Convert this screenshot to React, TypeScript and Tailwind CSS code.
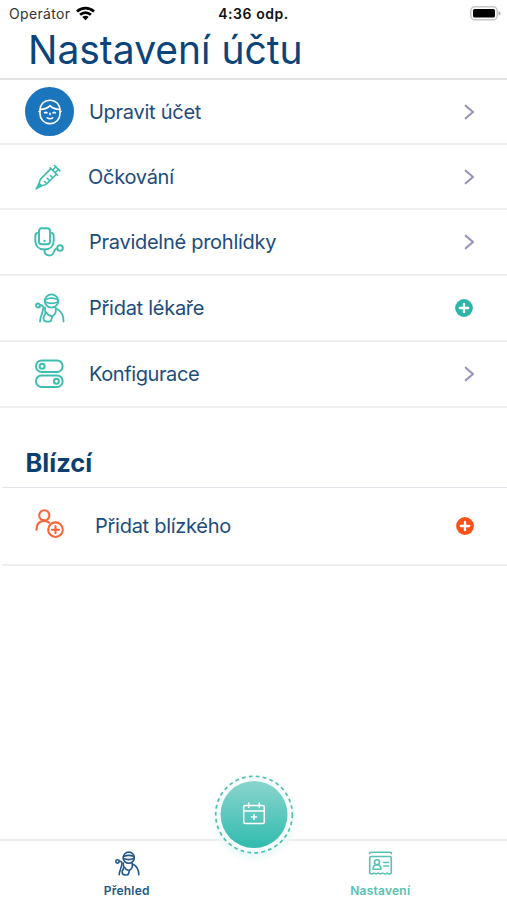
import type { ReactNode } from 'react';

const TEAL = '#3dbdb0';

function FaceIcon() {
  return (
    <svg width="24" height="26" viewBox="0 0 24 26" fill="none" stroke="white" strokeWidth="1.6" strokeLinecap="round" strokeLinejoin="round">
      <rect x="2" y="1.2" width="20" height="23.4" rx="9.6" />
      <path d="M2.2 10.5C6.5 10.3 10 8.8 12 6.6c2 2.200 5.500 3.700 9.800 3.900" />
      <path d="M6.600 13.800q1.200-1 2.400 0M15 13.800q1.200-1 2.400 0M9.300 18.800q2.700 1.800 5.400 0" />
      <path d="M12 14.400v1.200" />
      <path d="M2 12.500H1M22 12.500h1" />
    </svg>
  );
}

function SyringeIcon() {
  return (
    <svg className="mr-[3px]" width="26" height="26" viewBox="0 0 26 26" fill="none" stroke={TEAL} strokeWidth="1.600" strokeLinecap="round" strokeLinejoin="round">
      <path d="M15.200 3.900l7.400 7.400" />
      <path d="M15.700 4.900L6 14.600c-1.500 1.500-1.300 3.100-1.900 4.800l2.300 2.300c1.800-.6 3.700-.2 5.200-1.700l9.800-9.800" />
      <path d="M17.700 6l3.300-3.300M20.200 8.500l3.300-3.300M19.200 1.300l5.600 5.600" />
      <path d="M4.200 19.500L1.200 24.800l5.300-3.100M1.200 24.800l3.500-3.300" />
      <path d="M17.500 13.500l-2-2M14.500 16.500l-2.300-2.300M11.500 19.500l-2-2" />
    </svg>
  );
}

function StethoscopeIcon() {
  return (
    <svg className="mr-px" width="30" height="30" viewBox="0 0 30 30" fill="none" stroke={TEAL} strokeWidth="1.900" strokeLinecap="round" strokeLinejoin="round">
      <rect x="5" y="1.200" width="11" height="16" rx="2.700" />
      <path d="M3.200 6C1.700 6.500 1.300 7.800 1.300 9.500v3.700c0 5.800 3.800 9.300 9.200 9.300s9.200-3.500 9.200-9.300V9.500c0-1.700-.4-3-1.900-3.500" />
      <path d="M10.400 22.700c0 3.700 2 5.800 5 5.800 6.300 0 3-7 8-7.100" />
      <circle cx="26" cy="21" r="2.800" />
      <path d="M10.500 14v.1" strokeWidth="2.300" />
    </svg>
  );
}

function DoctorIcon({ size, color, weight }: { size: number; color: string; weight: number }) {
  return (
    <svg width={size} height={size} viewBox="0 0 30 30" fill="none" stroke={color} strokeWidth={weight} strokeLinecap="round" strokeLinejoin="round">
      <circle cx="16.500" cy="8" r="6.700" />
      <path d="M10.200 6.700q6.300-3 12.600 0M10.200 9q6.300 2.600 12.600 0" />
      <circle cx="3" cy="12.500" r="2" />
      <path d="M5 12c2.800.2 3.800 1.700 3.200 4-.7 2.500-.9 4-1.700 6.200-.8 2-1.400 3.500-1.500 6.300" />
      <path d="M10 14.500c-.2 2.300.8 4.500.2 6.500-.5 1.500-1.700 2.200-1.700 4 0 2.300 1.500 3.700 3.700 3.700h2c4 0 1-5 4.300-6.500 3-1.500 2.500-4 2.200-7.200" />
      <path d="M11.500 19.500c1 2.200 2.800 3.500 5 3.500M21 15.500c4 1.500 7.500 6 7.600 13" />
    </svg>
  );
}

function TogglesIcon() {
  return (
    <svg width="30" height="30" viewBox="0 0 30 30" fill="none" stroke={TEAL} strokeWidth="2">
      <rect x="1" y="1.400" width="26.600" height="11.600" rx="5.600" />
      <rect x="1" y="16.400" width="26.600" height="11.600" rx="5.600" />
      <circle cx="7.100" cy="7.300" r="2.500" />
      <circle cx="21.400" cy="22.200" r="2.500" />
    </svg>
  );
}

function PersonAddIcon() {
  return (
    <svg width="30" height="30" viewBox="0 0 30 30" fill="none" stroke="#f9663a" strokeWidth="2.100" strokeLinecap="round">
      <circle cx="9.300" cy="6.300" r="5.100" />
      <path d="M1.400 20.700c.2-5.200 3-8.700 7.700-8.800 2.100 0 3.700.6 5 1.700" />
      <circle cx="20.500" cy="20.700" r="7.300" />
      <path d="M20.500 17.100v7.200M16.900 20.700h7.200" />
    </svg>
  );
}

function Chevron() {
  return (
    <svg className="mr-8" width="11" height="16" viewBox="0 0 11 16" fill="none" stroke="#9592be" strokeWidth="2.100" strokeLinecap="round" strokeLinejoin="round">
      <path d="M1.700 1.700L9 8l-7.300 6.300" />
    </svg>
  );
}

function Plus({ color }: { color: string }) {
  return (
    <svg width="18" height="18" viewBox="0 0 18 18" stroke="white" strokeWidth="2.300" strokeLinecap="round">
      <circle cx="9" cy="9" r="8.900" fill={color} stroke="none" />
      <path d="M9 4.800v8.400M4.800 9h8.400" />
    </svg>
  );
}

function Row({ icon, label, end, className }: { icon: ReactNode; label: ReactNode; end: ReactNode; className: string }) {
  return (
    <div className={`flex items-center border-b-2 border-[#efeff1] ${className}`}>
      <div className="ml-[25px] flex w-[49px] shrink-0 justify-center">{icon}</div>
      <div className="flex-1 whitespace-nowrap text-[20px] leading-6 tracking-[-0.27px] text-[#1b4c7d]">{label}</div>
      {end}
    </div>
  );
}

export default function App() {
  return (
    <div className="flex h-[900px] w-[507px] flex-col overflow-hidden bg-white font-['Inter','Liberation_Sans',sans-serif]">
      <header className="h-[80px] shrink-0 border-b-2 border-[#e2e2e4]">
        <div className="grid h-[28px] grid-cols-3 items-center text-[14px] leading-4 text-[#111]">
          <div className="flex items-center gap-[6px] pl-[9px]">
            <span className="tracking-[0.35px] text-[#333]">Operátor</span>
            <svg className="mb-[2px]" width="19" height="15" viewBox="0 0 19 15" fill="none" stroke="black" strokeWidth="2.700">
              <path d="M1 5.400c4.900-4.500 12.100-4.500 17 0M4.100 8.700c3.100-2.900 7.700-2.900 10.800 0" />
              <path d="M9.500 14.300L6.300 11c1.800-1.700 4.600-1.700 6.400 0z" fill="black" stroke="none" />
            </svg>
          </div>
          <div className="text-center font-semibold tracking-[0.55px]">4:36 odp.</div>
          <svg className="mr-[6px] mb-[2px] justify-self-end" width="31" height="15" viewBox="0 0 31 15">
            <rect x=".8" y=".8" width="26.400" height="13" rx="4" fill="white" stroke="#c6c6c6" strokeWidth="1.500" />
            <rect x="3" y="3" width="22" height="8.600" rx="1.500" fill="black" />
            <path d="M28.500 5q2 .5 2 2.300t-2 2.300z" fill="#aaa" />
          </svg>
        </div>
        <h1 className="pl-[28px] text-[39px] leading-[43px] whitespace-nowrap text-[#0b447a]">Nastavení účtu</h1>
      </header>

      <main className="flex-1">
        <Row
          className="h-[65px]"
          icon={<div className="flex size-[49px] items-center justify-center rounded-full bg-[#1b75bc]"><FaceIcon /></div>}
          label={<span className="ml-[15px]">Upravit účet</span>}
          end={<Chevron />}
        />
        <Row className="h-[65px]" icon={<SyringeIcon />} label={<span className="ml-[14px]">Očkování</span>} end={<Chevron />} />
        <Row className="h-[66px]" icon={<StethoscopeIcon />} label={<span className="ml-[15px]">Pravidelné prohlídky</span>} end={<Chevron />} />
        <Row className="h-[66px]" icon={<DoctorIcon size={30} color={TEAL} weight={1.8} />} label={<span className="ml-[15px]">Přidat lékaře</span>} end={<div className="mr-[34px]"><Plus color="#2db5ab" /></div>} />
        <Row className="h-[66px]" icon={<TogglesIcon />} label={<span className="ml-[15px] tracking-[-0.4px]">Konfigurace</span>} end={<Chevron />} />

        <section className="ml-[2px]">
          <h2 className="h-[80px] border-b border-[#e2e5e9] pt-[39px] pl-[23.500px] text-[25.500px] leading-8 font-bold text-[#0c3f70]">Blízcí</h2>
          <Row
            className="h-[78px]"
            icon={<div className="mr-[4px] pb-1"><PersonAddIcon /></div>}
            label={<span className="ml-[19px]">Přidat blízkého</span>}
            end={<div className="mr-[33px]"><Plus color="#fc5119" /></div>}
          />
        </section>
      </main>

      <nav className="relative flex h-[61px] shrink-0 justify-around border-t-2 border-[#ebebee] text-[12px] font-semibold">
        <div className="flex w-1/2 flex-col items-center pt-[10px] text-[#22568a]">
          <div className="pl-[2px]"><DoctorIcon size={25} color="#22568a" weight={1.900} /></div>
          <span className="mt-[7px] leading-4 tracking-[0.2px]">Přehled</span>
        </div>
        <div className="flex w-1/2 flex-col items-center pt-[10px] text-[#55c2b3]">
          <svg width="25" height="25" viewBox="0 0 25 25" fill="none" stroke="#55c2b3" strokeWidth="1.600" strokeLinecap="round" strokeLinejoin="round">
            <path d="M1.500 2.700q.2-1.500 1.700-1.500h18.600q1.500 0 1.700 1.500" />
            <path d="M3 5.500h19q1.300 0 1.300 1.300V22q-2.200 2-4.200 0-2.200 1.800-4.400 0-2.200 1.800-4.400 0-2.200 1.800-4.400 0-2 2-4.200 0V6.800Q1.700 5.500 3 5.500z" />
            <circle cx="9" cy="11.200" r="2.500" />
            <path d="M5 18.300q0-4.500 4-4.500t4 4.500zM15.800 11.500h4.700M15.800 15h4.700" />
          </svg>
          <span className="mt-[7px] leading-4 tracking-[0.25px]">Nastavení</span>
        </div>
        <svg className="absolute top-[-75px] left-[205px]" width="98" height="98" viewBox="0 0 98 98" fill="none">
          <defs>
            <linearGradient id="disc" x1="0" y1="0" x2="0" y2="1">
              <stop offset="0" stopColor="#8ad5ce" />
              <stop offset="1" stopColor="#31bbae" />
            </linearGradient>
            <radialGradient id="halo">
              <stop offset=".75" stopColor="#e0f8f5" />
              <stop offset="1" stopColor="#f4fcfb" stopOpacity="0" />
            </radialGradient>
          </defs>
          <circle cx="49" cy="52" r="46" fill="url(#halo)" />
          <circle cx="49" cy="48.500" r="38.300" fill="#f6fdfc" stroke="#4fbfb0" strokeWidth="1.700" strokeDasharray="3.700 3.300" />
          <circle cx="49" cy="48.500" r="33.500" fill="url(#disc)" />
          <g stroke="white" strokeWidth="1.500" strokeLinecap="round">
            <rect x="38.700" y="39.500" width="20.600" height="18" rx="1.500" />
            <path d="M38.700 45h20.600M43.700 37v4.500M54.300 37v4.500M49 48.500v5M46.500 51h5" />
          </g>
        </svg>
      </nav>
    </div>
  );
}
